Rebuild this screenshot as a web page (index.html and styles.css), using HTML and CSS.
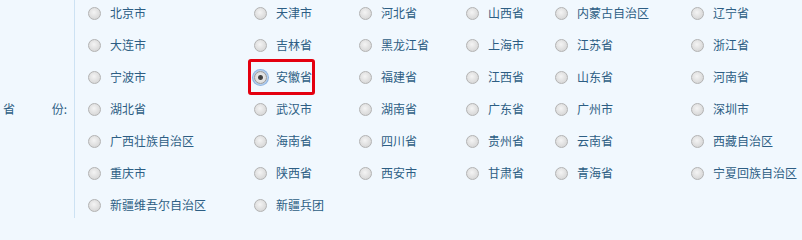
FILE: index.html
```html
<!DOCTYPE html>
<html lang="zh-CN">
<head>
<meta charset="utf-8">
<title>省份</title>
<link rel="stylesheet" href="styles.css">
</head>
<body>
<div class="field">
  <div class="field-label"><span>省</span><span>份:</span></div>
  <div class="options">
    <label class="opt"><span class="radio"></span><span>北京市</span></label>
    <label class="opt"><span class="radio"></span><span>天津市</span></label>
    <label class="opt"><span class="radio"></span><span>河北省</span></label>
    <label class="opt"><span class="radio"></span><span>山西省</span></label>
    <label class="opt"><span class="radio"></span><span>内蒙古自治区</span></label>
    <label class="opt"><span class="radio"></span><span>辽宁省</span></label>

    <label class="opt"><span class="radio"></span><span>大连市</span></label>
    <label class="opt"><span class="radio"></span><span>吉林省</span></label>
    <label class="opt"><span class="radio"></span><span>黑龙江省</span></label>
    <label class="opt"><span class="radio"></span><span>上海市</span></label>
    <label class="opt"><span class="radio"></span><span>江苏省</span></label>
    <label class="opt"><span class="radio"></span><span>浙江省</span></label>

    <label class="opt"><span class="radio"></span><span>宁波市</span></label>
    <label class="opt selected"><span class="radio checked"></span><span>安徽省</span></label>
    <label class="opt"><span class="radio"></span><span>福建省</span></label>
    <label class="opt"><span class="radio"></span><span>江西省</span></label>
    <label class="opt"><span class="radio"></span><span>山东省</span></label>
    <label class="opt"><span class="radio"></span><span>河南省</span></label>

    <label class="opt"><span class="radio"></span><span>湖北省</span></label>
    <label class="opt"><span class="radio"></span><span>武汉市</span></label>
    <label class="opt"><span class="radio"></span><span>湖南省</span></label>
    <label class="opt"><span class="radio"></span><span>广东省</span></label>
    <label class="opt"><span class="radio"></span><span>广州市</span></label>
    <label class="opt"><span class="radio"></span><span>深圳市</span></label>

    <label class="opt"><span class="radio"></span><span>广西壮族自治区</span></label>
    <label class="opt"><span class="radio"></span><span>海南省</span></label>
    <label class="opt"><span class="radio"></span><span>四川省</span></label>
    <label class="opt"><span class="radio"></span><span>贵州省</span></label>
    <label class="opt"><span class="radio"></span><span>云南省</span></label>
    <label class="opt"><span class="radio"></span><span>西藏自治区</span></label>

    <label class="opt"><span class="radio"></span><span>重庆市</span></label>
    <label class="opt"><span class="radio"></span><span>陕西省</span></label>
    <label class="opt"><span class="radio"></span><span>西安市</span></label>
    <label class="opt"><span class="radio"></span><span>甘肃省</span></label>
    <label class="opt"><span class="radio"></span><span>青海省</span></label>
    <label class="opt"><span class="radio"></span><span>宁夏回族自治区</span></label>

    <label class="opt"><span class="radio"></span><span>新疆维吾尔自治区</span></label>
    <label class="opt"><span class="radio"></span><span>新疆兵团</span></label>
  </div>
</div>
</body>
</html>
```

FILE: styles.css
```css
html, body {
  margin: 0;
  padding: 0;
  background: #f1f8fe;
}

body {
  font-family: "Noto Sans CJK SC", "Noto Sans", sans-serif;
  font-size: 12px;
  color: #2d5e84;
  width: 802px;
  height: 218px;
  overflow: hidden;
}

.field {
  display: flex;
  height: 218px;
}

.field-label {
  width: 64px;
  padding: 0 7px 0 3px;
  display: flex;
  align-items: center;
  justify-content: space-between;
  border-right: 1px solid #cde2f3;
  line-height: 12px;
}

.options {
  display: grid;
  grid-template-columns: 166px 105px 107px 89px 136px 1fr;
  grid-auto-rows: 26px;
  row-gap: 6px;
  padding-left: 13px;
  align-content: start;
}

.opt {
  position: relative;
  justify-self: start;
  display: inline-flex;
  align-items: center;
  gap: 9px;
  line-height: 14px;
  white-space: nowrap;
}

.radio {
  box-sizing: border-box;
  width: 13px;
  height: 13px;
  border-radius: 50%;
  border: 1px solid #b3b3b3;
  background: radial-gradient(circle at 45% 40%, #f4f4f4 0, #e3e3e3 45%, #cfcfcf 100%);
  flex: none;
}

.radio.checked {
  position: relative;
  background: radial-gradient(circle, #3a3a3a 0, #4a4a4a 2px, #e6e6e6 3px, #d4d4d4 100%);
  border-color: #9a9a9a;
  box-shadow: 0 0 0 1px #b9d2ef, 0 0 0 2px #8fb4e2;
}

.selected::after {
  content: "";
  position: absolute;
  top: -5px;
  bottom: -5px;
  left: -6px;
  right: -3px;
  border: 3px solid #e4000f;
  border-radius: 3px;
  pointer-events: none;
}
```
